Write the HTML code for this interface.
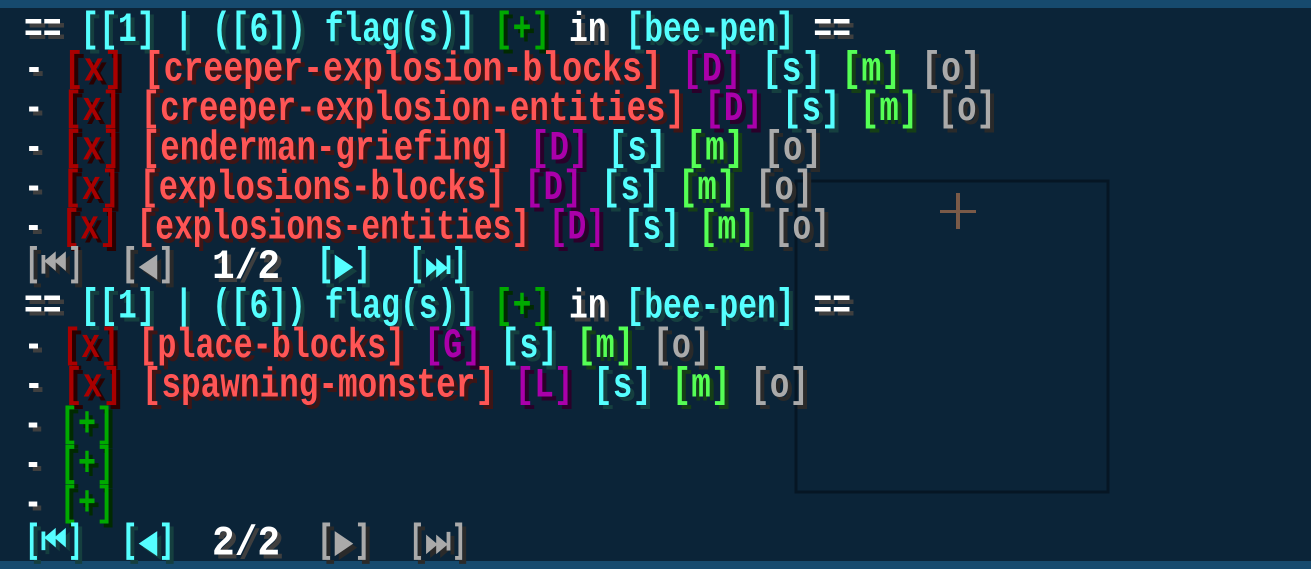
<!DOCTYPE html>
<html><head><meta charset="utf-8"><style>
html,body{margin:0;padding:0;width:1311px;height:569px;overflow:hidden;background:#0b2438}
svg{position:absolute;left:0;top:0}
text{font-family:"Liberation Mono","DejaVu Sans Mono",monospace;font-size:42px;font-weight:bold}
.w{fill:#ffffff}.a{fill:#55ffff}.dr{fill:#aa0000}.r{fill:#ff5555}.p{fill:#aa00aa}.g{fill:#55ff55}.dg{fill:#00aa00}.o{fill:#aaaaaa}
.sh .w{fill:#3f3f3f}.sh .a{fill:#153f3f}.sh .dr{fill:#2a0000}.sh .r{fill:#3f1515}.sh .p{fill:#2a002a}.sh .g{fill:#153f15}.sh .dg{fill:#002a00}.sh .o{fill:#2a2a2a}
.nav{font-family:"DejaVu Sans Mono","Liberation Mono",monospace}
</style></head><body>
<svg width="1311" height="569" viewBox="0 0 1311 569">
<rect x="0" y="0" width="1311" height="8" fill="#164a6e"/>
<rect x="0" y="561" width="1311" height="8" fill="#164a6e"/>
<rect x="0" y="8" width="1311" height="553" fill="#0b2438"/>
<rect x="796" y="181" width="312" height="311" fill="none" stroke="#061624" stroke-width="3"/>
<rect x="940" y="210" width="36" height="3" fill="#7a5a48"/>
<rect x="956" y="193" width="4" height="36" fill="#7a5a48"/>
<g class="sh" transform="translate(4,4)">
<text x="24" y="41" textLength="827" lengthAdjust="spacingAndGlyphs"><tspan class="w">== </tspan><tspan class="a">[[1] | ([6]) flag(s)] </tspan><tspan class="dg">[+] </tspan><tspan class="w">in </tspan><tspan class="a">[bee-pen] </tspan><tspan class="w">==</tspan></text>
<text x="24" y="80.5" textLength="957" lengthAdjust="spacingAndGlyphs"><tspan class="w">- </tspan><tspan class="dr">[x] </tspan><tspan class="r">[creeper-explosion-blocks] </tspan><tspan class="p">[D] </tspan><tspan class="a">[s] </tspan><tspan class="g">[m] </tspan><tspan class="o">[o]</tspan></text>
<text x="24" y="120" textLength="972" lengthAdjust="spacingAndGlyphs"><tspan class="w">- </tspan><tspan class="dr">[x] </tspan><tspan class="r">[creeper-explosion-entities] </tspan><tspan class="p">[D] </tspan><tspan class="a">[s] </tspan><tspan class="g">[m] </tspan><tspan class="o">[o]</tspan></text>
<text x="24" y="159.5" textLength="798" lengthAdjust="spacingAndGlyphs"><tspan class="w">- </tspan><tspan class="dr">[x] </tspan><tspan class="r">[enderman-griefing] </tspan><tspan class="p">[D] </tspan><tspan class="a">[s] </tspan><tspan class="g">[m] </tspan><tspan class="o">[o]</tspan></text>
<text x="24" y="199" textLength="789" lengthAdjust="spacingAndGlyphs"><tspan class="w">- </tspan><tspan class="dr">[x] </tspan><tspan class="r">[explosions-blocks] </tspan><tspan class="p">[D] </tspan><tspan class="a">[s] </tspan><tspan class="g">[m] </tspan><tspan class="o">[o]</tspan></text>
<text x="24" y="238.5" textLength="806" lengthAdjust="spacingAndGlyphs"><tspan class="w">- </tspan><tspan class="dr">[x] </tspan><tspan class="r">[explosions-entities] </tspan><tspan class="p">[D] </tspan><tspan class="a">[s] </tspan><tspan class="g">[m] </tspan><tspan class="o">[o]</tspan></text>
<text class="nav o" x="24" y="278" textLength="60" lengthAdjust="spacingAndGlyphs">[⏮]</text>
<text class="nav o" x="120" y="278" textLength="56" lengthAdjust="spacingAndGlyphs">[◀]</text>
<text class="w" x="212" y="278" textLength="68" lengthAdjust="spacingAndGlyphs">1/2</text>
<text class="nav a" x="316" y="278" textLength="56" lengthAdjust="spacingAndGlyphs">[▶]</text>
<text class="nav a" x="408" y="278" textLength="60" lengthAdjust="spacingAndGlyphs">[⏭]</text>
<text x="24" y="317.5" textLength="827" lengthAdjust="spacingAndGlyphs"><tspan class="w">== </tspan><tspan class="a">[[1] | ([6]) flag(s)] </tspan><tspan class="dg">[+] </tspan><tspan class="w">in </tspan><tspan class="a">[bee-pen] </tspan><tspan class="w">==</tspan></text>
<text x="24" y="357" textLength="686" lengthAdjust="spacingAndGlyphs"><tspan class="w">- </tspan><tspan class="dr">[x] </tspan><tspan class="r">[place-blocks] </tspan><tspan class="p">[G] </tspan><tspan class="a">[s] </tspan><tspan class="g">[m] </tspan><tspan class="o">[o]</tspan></text>
<text x="24" y="396.5" textLength="785" lengthAdjust="spacingAndGlyphs"><tspan class="w">- </tspan><tspan class="dr">[x] </tspan><tspan class="r">[spawning-monster] </tspan><tspan class="p">[L] </tspan><tspan class="a">[s] </tspan><tspan class="g">[m] </tspan><tspan class="o">[o]</tspan></text>
<text x="24" y="436" textLength="90" lengthAdjust="spacingAndGlyphs"><tspan class="w">- </tspan><tspan class="dg">[+]</tspan></text>
<text x="24" y="475.5" textLength="90" lengthAdjust="spacingAndGlyphs"><tspan class="w">- </tspan><tspan class="dg">[+]</tspan></text>
<text x="24" y="515" textLength="90" lengthAdjust="spacingAndGlyphs"><tspan class="w">- </tspan><tspan class="dg">[+]</tspan></text>
<text class="nav a" x="24" y="554.5" textLength="60" lengthAdjust="spacingAndGlyphs">[⏮]</text>
<text class="nav a" x="120" y="554.5" textLength="56" lengthAdjust="spacingAndGlyphs">[◀]</text>
<text class="w" x="212" y="554.5" textLength="68" lengthAdjust="spacingAndGlyphs">2/2</text>
<text class="nav o" x="316" y="554.5" textLength="56" lengthAdjust="spacingAndGlyphs">[▶]</text>
<text class="nav o" x="408" y="554.5" textLength="60" lengthAdjust="spacingAndGlyphs">[⏭]</text>
</g>
<g>
<text x="24" y="41" textLength="827" lengthAdjust="spacingAndGlyphs"><tspan class="w">== </tspan><tspan class="a">[[1] | ([6]) flag(s)] </tspan><tspan class="dg">[+] </tspan><tspan class="w">in </tspan><tspan class="a">[bee-pen] </tspan><tspan class="w">==</tspan></text>
<text x="24" y="80.5" textLength="957" lengthAdjust="spacingAndGlyphs"><tspan class="w">- </tspan><tspan class="dr">[x] </tspan><tspan class="r">[creeper-explosion-blocks] </tspan><tspan class="p">[D] </tspan><tspan class="a">[s] </tspan><tspan class="g">[m] </tspan><tspan class="o">[o]</tspan></text>
<text x="24" y="120" textLength="972" lengthAdjust="spacingAndGlyphs"><tspan class="w">- </tspan><tspan class="dr">[x] </tspan><tspan class="r">[creeper-explosion-entities] </tspan><tspan class="p">[D] </tspan><tspan class="a">[s] </tspan><tspan class="g">[m] </tspan><tspan class="o">[o]</tspan></text>
<text x="24" y="159.5" textLength="798" lengthAdjust="spacingAndGlyphs"><tspan class="w">- </tspan><tspan class="dr">[x] </tspan><tspan class="r">[enderman-griefing] </tspan><tspan class="p">[D] </tspan><tspan class="a">[s] </tspan><tspan class="g">[m] </tspan><tspan class="o">[o]</tspan></text>
<text x="24" y="199" textLength="789" lengthAdjust="spacingAndGlyphs"><tspan class="w">- </tspan><tspan class="dr">[x] </tspan><tspan class="r">[explosions-blocks] </tspan><tspan class="p">[D] </tspan><tspan class="a">[s] </tspan><tspan class="g">[m] </tspan><tspan class="o">[o]</tspan></text>
<text x="24" y="238.5" textLength="806" lengthAdjust="spacingAndGlyphs"><tspan class="w">- </tspan><tspan class="dr">[x] </tspan><tspan class="r">[explosions-entities] </tspan><tspan class="p">[D] </tspan><tspan class="a">[s] </tspan><tspan class="g">[m] </tspan><tspan class="o">[o]</tspan></text>
<text class="nav o" x="24" y="278" textLength="60" lengthAdjust="spacingAndGlyphs">[⏮]</text>
<text class="nav o" x="120" y="278" textLength="56" lengthAdjust="spacingAndGlyphs">[◀]</text>
<text class="w" x="212" y="278" textLength="68" lengthAdjust="spacingAndGlyphs">1/2</text>
<text class="nav a" x="316" y="278" textLength="56" lengthAdjust="spacingAndGlyphs">[▶]</text>
<text class="nav a" x="408" y="278" textLength="60" lengthAdjust="spacingAndGlyphs">[⏭]</text>
<text x="24" y="317.5" textLength="827" lengthAdjust="spacingAndGlyphs"><tspan class="w">== </tspan><tspan class="a">[[1] | ([6]) flag(s)] </tspan><tspan class="dg">[+] </tspan><tspan class="w">in </tspan><tspan class="a">[bee-pen] </tspan><tspan class="w">==</tspan></text>
<text x="24" y="357" textLength="686" lengthAdjust="spacingAndGlyphs"><tspan class="w">- </tspan><tspan class="dr">[x] </tspan><tspan class="r">[place-blocks] </tspan><tspan class="p">[G] </tspan><tspan class="a">[s] </tspan><tspan class="g">[m] </tspan><tspan class="o">[o]</tspan></text>
<text x="24" y="396.5" textLength="785" lengthAdjust="spacingAndGlyphs"><tspan class="w">- </tspan><tspan class="dr">[x] </tspan><tspan class="r">[spawning-monster] </tspan><tspan class="p">[L] </tspan><tspan class="a">[s] </tspan><tspan class="g">[m] </tspan><tspan class="o">[o]</tspan></text>
<text x="24" y="436" textLength="90" lengthAdjust="spacingAndGlyphs"><tspan class="w">- </tspan><tspan class="dg">[+]</tspan></text>
<text x="24" y="475.5" textLength="90" lengthAdjust="spacingAndGlyphs"><tspan class="w">- </tspan><tspan class="dg">[+]</tspan></text>
<text x="24" y="515" textLength="90" lengthAdjust="spacingAndGlyphs"><tspan class="w">- </tspan><tspan class="dg">[+]</tspan></text>
<text class="nav a" x="24" y="554.5" textLength="60" lengthAdjust="spacingAndGlyphs">[⏮]</text>
<text class="nav a" x="120" y="554.5" textLength="56" lengthAdjust="spacingAndGlyphs">[◀]</text>
<text class="w" x="212" y="554.5" textLength="68" lengthAdjust="spacingAndGlyphs">2/2</text>
<text class="nav o" x="316" y="554.5" textLength="56" lengthAdjust="spacingAndGlyphs">[▶]</text>
<text class="nav o" x="408" y="554.5" textLength="60" lengthAdjust="spacingAndGlyphs">[⏭]</text>
</g>
</svg>
</body></html>
